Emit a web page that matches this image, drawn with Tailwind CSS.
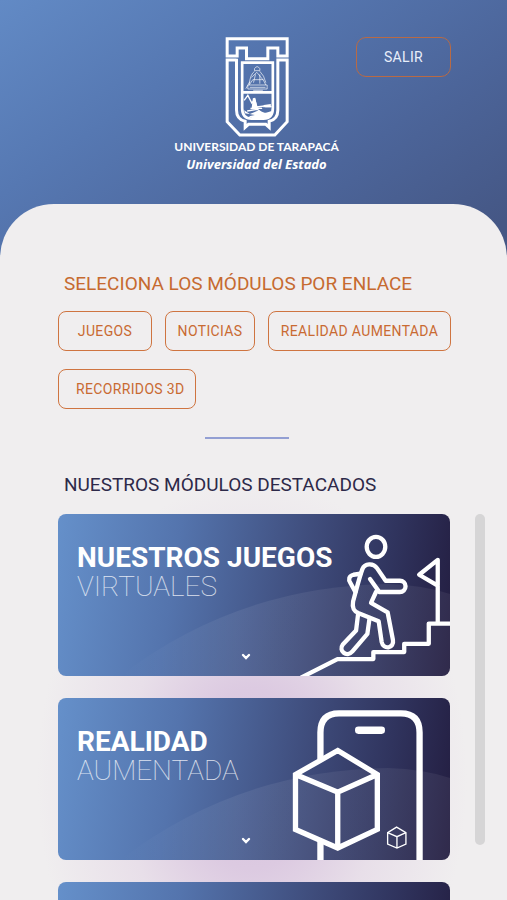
<!DOCTYPE html>
<html lang="es">
<head>
  <meta charset="UTF-8" />
  <meta name="viewport" content="width=device-width, initial-scale=1.0"/>
  <title>Universidad de Tarapacá - Módulos</title>
  <script src="https://cdn.jsdelivr.net/npm/@tailwindcss/browser@4"></script>
</head>
<body class="font-['Roboto',sans-serif] bg-[#f0eeef]">
  <div class="h-screen overflow-hidden flex flex-col bg-[linear-gradient(145deg,#628ac5_0px,#5678b2_160px,#4c659a_330px,#455785_470px)]">

    <!-- Header -->
    <header class="grid grid-cols-[1fr_auto_1fr] items-start shrink-0 pt-9 pb-8 pl-[62px] pr-14">
      <div></div>
      <div class="flex flex-col items-center text-white whitespace-nowrap">
        <svg class="w-[66px] h-[102px]" viewBox="26 18 197 306" fill="none" stroke="white" stroke-width="9">
          <path d="M35 26H215V78H187V54H157V86H93V54H65V78H35Z"/>
          <path d="M63 90H35V275L73 315H178L215 275V90H187V240Q187 268 161 274V292L151 283H99L89 292V274Q63 268 63 240V86"/>
          <path stroke-width="8" d="M80 98H172V235Q172 266 144 266H108Q80 266 80 235ZM80 187H172"/>
          <g stroke-width="3" opacity=".65">
            <path d="M117 116Q125 104 133 116V122H117ZM117 124Q105 132 101 162M133 124Q146 136 151 158M108 142L124 127L143 150M97 165H155V177H97ZM101 165L112 149H143L151 165M120 133L114 158M133 133V161M91 176L103 155M103 172H150M113 181H142"/>
          </g>
          <path stroke-width="4" d="M86 211L97 196L109 219L118 209L124 231L147 228M105 235H140M149 230H168M95 243L126 238L136 246M130 250H164"/>
          <path fill="white" stroke="none" d="M112 205L119 203L124 225L129 238H108ZM86 241L103 252L130 241L149 250L168 243V254Q160 264 145 264H110L100 259L118 255L88 250ZM145 225L166 222V232H143Z"/>
        </svg>
        <p class="text-xs leading-[18px] font-bold font-['Lato',sans-serif]">UNIVERSIDAD DE TARAPACÁ</p>
        <p class="text-[13px] leading-4 font-bold italic font-['Open_Sans',sans-serif]">Universidad del Estado</p>
      </div>
      <button class="justify-self-end mt-px w-[95px] h-10 rounded-[10px] border border-[#b86a45] text-sm tracking-wide text-[#e8eefa]">SALIR</button>
    </header>

    <!-- Content -->
    <main class="flex-1 min-h-0 overflow-hidden rounded-t-[54px] bg-[#f0eeef] pt-[68px]">
      <section class="pl-[58px] pr-14">
        <h2 class="pl-[6px] text-[19px] leading-6 text-[#c66a30]">SELECIONA LOS MÓDULOS POR ENLACE</h2>
        <nav class="mt-[15px] flex flex-wrap gap-x-[13px] gap-y-[18px] text-sm tracking-wide text-[#c96a32] whitespace-nowrap">
          <a href="#juegos" class="flex items-center justify-center w-[94px] h-10 rounded-lg border border-[#cf7440]">JUEGOS</a>
          <a href="#noticias" class="flex items-center justify-center w-[90px] h-10 rounded-lg border border-[#cf7440]">NOTICIAS</a>
          <a href="#realidad" class="flex items-center justify-center w-[183px] h-10 rounded-lg border border-[#cf7440]">REALIDAD AUMENTADA</a>
          <a href="#recorridos" class="flex items-center pl-[17px] w-[138px] h-10 rounded-lg border border-[#cf7440]">RECORRIDOS 3D</a>
        </nav>
      </section>

      <hr class="mt-7 ml-[205px] w-[84px] border-0 h-[2px] bg-[#939fd3]">

      <div class="bg-[radial-gradient(215px_300px_at_252px_340px,#d7c2dd_0%,#dccae1_30%,#e8dfe9_60%,#f0eeef_100%)]">
        <h2 class="pt-[34px] pl-16 text-[19px] leading-6 text-[#2d2949]">NUESTROS MÓDULOS DESTACADOS</h2>

        <div class="mt-[17px] pl-[58px] pr-[22px] flex items-start gap-[25px]">
          <div class="flex-1 flex flex-col gap-[22px]">

            <article id="juegos" class="relative h-[162px] overflow-hidden rounded-lg flex flex-col pt-[29px] pb-4 px-[19px] bg-[linear-gradient(98deg,#6590ca_0%,#5474ad_30%,#3e4b7a_63%,#30345e_82%,#231d40_100%)]">
              <svg class="absolute inset-0 w-full h-full" viewBox="0 0 392 162" preserveAspectRatio="none">
                <defs>
                  <linearGradient id="hill"><stop offset="0" stop-color="white" stop-opacity="0"/><stop offset=".35" stop-color="white" stop-opacity=".07"/><stop offset="1" stop-color="white" stop-opacity=".06"/></linearGradient>
                </defs>
                <path fill="url(#hill)" d="M62 162Q180 72 330 70Q365 71 392 80V162Z"/>
              </svg>
              <svg class="absolute right-0 bottom-0 w-[150px] h-[162px]" viewBox="60 27 450 488" fill="none" stroke="white" stroke-width="13" stroke-linejoin="round" stroke-linecap="round">
                <ellipse cx="288" cy="126" rx="28" ry="30"/>
                <path d="M270 223L298 262H360A17 17 0 0 0 360 228H317L291 190C280 174 254 175 247 193C237 220 225 270 219 290C215 311 222 320 236 326L296 350L305 412C310 437 344 433 339 406L323 323L273 295L288 262"/>
                <path d="M241 207L220 210C206 213 204 225 211 235L226 262"/>
                <path d="M234 329L228 378L188 420C174 439 200 461 217 441L262 388L268 345"/>
                <path stroke-linecap="butt" d="M60 521L172 464H280V443H373V418H447V357H512"/>
                <path d="M474 352V165L418 210L474 243"/>
              </svg>
              <h3 class="relative text-[28px] leading-[29px] text-white"><span class="block font-bold">NUESTROS JUEGOS</span><span class="block font-thin text-white/80">VIRTUALES</span></h3>
              <button class="relative mt-auto self-center mr-4" aria-label="Ver juegos">
                <svg class="w-[10px] h-[7px]" viewBox="0 0 10 7" fill="none" stroke="white" stroke-width="2.4" stroke-linecap="round"><path d="M2 2L5 5L8 2"/></svg>
              </button>
            </article>

            <article id="realidad" class="relative h-[162px] overflow-hidden rounded-lg flex flex-col pt-[29px] pb-4 px-[19px] bg-[linear-gradient(98deg,#6590ca_0%,#5474ad_30%,#3e4b7a_63%,#30345e_82%,#231d40_100%)]">
              <svg class="absolute inset-0 w-full h-full" viewBox="0 0 392 162" preserveAspectRatio="none">
                <path fill="url(#hill)" d="M62 162Q180 72 330 70Q365 71 392 80V162Z"/>
              </svg>
              <svg class="absolute right-0 bottom-0 w-[160px] h-[162px]" viewBox="60 24 480 487" fill="none" stroke="white">
                <path stroke-width="19" d="M151 208V128Q151 70 207 70H393Q449 70 449 128V514M151 456V514"/>
                <rect x="255" y="110" width="90" height="22" rx="10" fill="white" stroke="none"/>
                <path stroke-width="16" d="M203 182L322 254V419L203 475L76 419V254ZM76 254L203 307L322 254M203 307V475"/>
                <path stroke-width="4" d="M380 412L408 429V463L381 475L353 463V429ZM353 429L381 441L408 429M381 441V475"/>
              </svg>
              <h3 class="relative text-[28px] leading-[29px] text-white"><span class="block font-bold">REALIDAD</span><span class="block font-thin text-white/80">AUMENTADA</span></h3>
              <button class="relative mt-auto self-center mr-4" aria-label="Ver realidad aumentada">
                <svg class="w-[10px] h-[7px]" viewBox="0 0 10 7" fill="none" stroke="white" stroke-width="2.4" stroke-linecap="round"><path d="M2 2L5 5L8 2"/></svg>
              </button>
            </article>

            <article id="recorridos" class="h-[162px] rounded-lg bg-[linear-gradient(98deg,#6590ca_0%,#5474ad_30%,#3e4b7a_63%,#30345e_82%,#231d40_100%)]"></article>
          </div>

          <!-- Scroll track -->
          <div class="w-[10px] h-[331px] rounded-full bg-[#d6d5d6]"></div>
        </div>
      </div>
    </main>
  </div>
</body>
</html>
